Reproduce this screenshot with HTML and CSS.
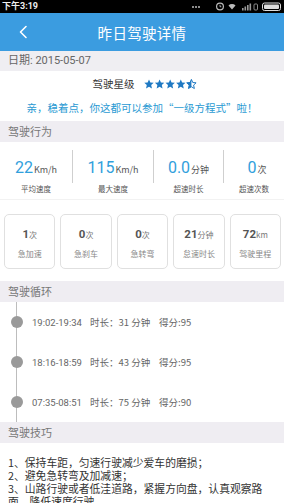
FILE: index.html
```html
<!DOCTYPE html>
<html lang="zh">
<head>
<meta charset="utf-8">
<title>昨日驾驶详情</title>
<link rel="stylesheet" href="styles.css">
</head>
<body>
<div class="page">
  <div class="status">
    <span class="clock">下午3:19</span>
    <span class="sicons">
      <svg width="96" height="13" viewBox="0 0 96 13">
        <g fill="#bbb">
          <circle cx="5" cy="7" r="1"/><circle cx="8" cy="7" r="1"/><circle cx="11" cy="7" r="1"/>
        </g>
        <circle cx="32" cy="6.5" r="3.4" fill="none" stroke="#bbb" stroke-width="1.2"/>
        <path d="M32 4.8v1.9h1.3" fill="none" stroke="#bbb" stroke-width="0.9"/>
        <path d="M44 9.5 L40.5 5.5 A5 5 0 0 1 47.5 5.5 Z" fill="#bbb"/>
        <g fill="#999">
          <rect x="54" y="8" width="1.6" height="2.5"/><rect x="56.5" y="6.5" width="1.6" height="4"/>
          <rect x="59" y="5" width="1.6" height="5.5"/><rect x="61.5" y="3.5" width="1.6" height="7"/>
        </g>
        <rect x="66" y="4" width="3.5" height="6" rx="1" fill="none" stroke="#999" stroke-width="0.9"/>
        <rect x="74.5" y="3" width="18" height="7.5" rx="2" fill="none" stroke="#ddd" stroke-width="1"/>
        <rect x="76" y="4.5" width="15" height="4.5" rx="1" fill="#ddd"/>
      </svg>
    </span>
  </div>

  <header class="appbar">
    <span class="back">
      <svg width="10" height="14" viewBox="0 0 10 14"><path d="M8 1.5 L2.5 7 L8 12.5" fill="none" stroke="#fff" stroke-width="1.6" stroke-linecap="round" stroke-linejoin="round"/></svg>
    </span>
    <h1 class="title">昨日驾驶详情</h1>
    <span></span>
  </header>

  <div class="datebar">日期: 2015-05-07</div>

  <div class="rating">
    <div class="rating-row">
      <span class="rating-label">驾驶星级</span>
      <span class="stars">
        <svg width="54" height="11" viewBox="0 0 54 11">
          <defs>
            <path id="st" d="M5 0.4 L6.35 3.5 L9.7 3.8 L7.2 6.1 L7.95 9.5 L5 7.75 L2.05 9.5 L2.8 6.1 L0.3 3.8 L3.65 3.5 Z"/>
            <clipPath id="half"><rect x="0" y="0" width="5" height="11"/></clipPath>
          </defs>
          <g fill="#1f79c3">
            <use href="#st" x="0"/>
            <use href="#st" x="10.6"/>
            <use href="#st" x="21.2"/>
            <use href="#st" x="31.8"/>
          </g>
          <g transform="translate(42.4 0)">
            <use href="#st" fill="none" stroke="#1f79c3" stroke-width="1"/>
            <use href="#st" fill="#1f79c3" clip-path="url(#half)"/>
          </g>
        </svg>
      </span>
    </div>
    <p class="cheer">亲，稳着点，你这都可以参加“一级方程式”啦！</p>
  </div>

  <div class="section-head">驾驶行为</div>
  <div class="stats">
    <div class="stat s1"><div class="val"><b>22</b><i>Km/h</i></div><div class="lab">平均速度</div></div>
    <div class="stat s2"><div class="val"><b>115</b><i>Km/h</i></div><div class="lab">最大速度</div></div>
    <div class="stat s3"><div class="val"><b>0.0</b><i>分钟</i></div><div class="lab">超速时长</div></div>
    <div class="stat s4"><div class="val"><b>0</b><i>次</i></div><div class="lab">超速次数</div></div>
  </div>

  <div class="cards">
    <div class="card"><div class="cval"><b>1</b><i>次</i></div><div class="clab">急加速</div></div>
    <div class="card"><div class="cval"><b>0</b><i>次</i></div><div class="clab">急刹车</div></div>
    <div class="card"><div class="cval"><b>0</b><i>次</i></div><div class="clab">急转弯</div></div>
    <div class="card"><div class="cval"><b>21</b><i>分钟</i></div><div class="clab">怠速时长</div></div>
    <div class="card"><div class="cval"><b>72</b><i>km</i></div><div class="clab">驾驶里程</div></div>
  </div>

  <div class="section-head">驾驶循环</div>
  <div class="timeline">
    <div class="trip"><span class="dot"></span><span class="ttime">19:02-19:34</span><span class="tdur">时长：31 分钟</span><span class="tscore">得分:95</span></div>
    <div class="trip"><span class="dot"></span><span class="ttime">18:16-18:59</span><span class="tdur">时长：43 分钟</span><span class="tscore">得分:95</span></div>
    <div class="trip"><span class="dot"></span><span class="ttime">07:35-08:51</span><span class="tdur">时长：75 分钟</span><span class="tscore">得分:90</span></div>
  </div>

  <div class="section-head">驾驶技巧</div>
  <div class="tips">
    <p>1、保持车距，匀速行驶减少爱车的磨损；</p>
    <p>2、避免急转弯及加减速；</p>
    <p>3、山路行驶或者低洼道路，紧握方向盘，认真观察路面，降低速度行驶。</p>
  </div>
</div>
</body>
</html>
```

FILE: styles.css
```css
* { box-sizing: border-box; margin: 0; padding: 0; }
html, body { background: #fff; }
body {
  width: 284px;
  height: 503px;
  overflow: hidden;
  font-family: "Noto Sans CJK SC", "Roboto", sans-serif;
  color: #333;
}
.page { width: 284px; }

.status {
  height: 13px;
  background: #000;
  display: flex;
  align-items: center;
  justify-content: space-between;
  padding-left: 2px;
}
.clock { color: #eee; font-size: 9px; font-weight: bold; line-height: 13px; font-family: "Roboto", "Noto Sans CJK SC", sans-serif; }
.sicons { display: flex; height: 13px; }

.appbar {
  height: 38px;
  background: #3b9ce0;
  display: grid;
  grid-template-columns: 1fr auto 1fr;
  align-items: center;
}
.back { padding-left: 18px; display: flex; align-items: center; }
.title { color: #fff; font-size: 14.5px; font-weight: normal; letter-spacing: 0.3px; }

.datebar {
  height: 20px;
  background: #efeef2;
  color: #666;
  font-size: 11px;
  line-height: 20px;
  padding-left: 8px;
  font-family: "Roboto", "Noto Sans CJK SC", sans-serif;
}

.rating { height: 50px; padding-top: 5px; text-align: center; }
.rating-row { display: flex; justify-content: center; align-items: center; height: 16px; gap: 9px; padding-left: 6px; }
.rating-label { font-size: 10.5px; color: #333; line-height: 16px; }
.stars { display: flex; align-items: center; }
.cheer { margin-top: 9px; font-size: 10.5px; line-height: 14px; color: #2a9ad3; }

.section-head {
  height: 21px;
  background: #efedf2;
  color: #777;
  font-size: 11px;
  line-height: 21px;
  padding-left: 8px;
}

.stats {
  height: 58px;
  display: grid;
  grid-template-columns: 72px 81px 70px 1fr;
  padding-top: 8px;
  border-bottom: 1px solid #f2f2f2;
}
.stat { height: 33px; padding-top: 7px; text-align: center; }
.stat + .stat { border-left: 1px solid #cfcfcf; }
.val { line-height: 18px; white-space: nowrap; }
.val b { font-weight: normal; font-size: 16px; color: #31a0dc; font-family: "Roboto", sans-serif; }
.val i { font-style: normal; font-size: 9px; color: #555; margin-left: 1px; }
.s4 .val { padding-left: 6px; }
.lab { margin-top: 4px; font-size: 7.5px; line-height: 12px; color: #555; }

.cards {
  display: flex;
  gap: 5px;
  padding: 14px 3px 12px 4px;
}
.card {
  flex: 1;
  height: 55px;
  border: 1px solid #e0e0e0;
  border-radius: 5px;
  text-align: center;
  padding-top: 9px;
}
.cval { line-height: 14px; color: #555; white-space: nowrap; }
.cval b { font-size: 11.5px; font-weight: bold; font-family: "Roboto", sans-serif; color: #555; }
.cval i { font-style: normal; font-size: 8px; color: #777; }
.clab { margin-top: 6px; font-size: 8px; line-height: 12px; color: #888; }

.timeline { position: relative; height: 120px; }
.timeline::before {
  content: "";
  position: absolute;
  left: 16px;
  top: 0;
  bottom: 0;
  width: 1px;
  background: #bdbdbd;
}
.trip { height: 40px; display: flex; align-items: center; font-size: 9.5px; color: #666; white-space: nowrap; position: relative; }
.dot { width: 12px; height: 12px; border-radius: 50%; background: #9a9a9a; margin-left: 11px; margin-right: 9px; }
.ttime { width: 58px; font-family: "Roboto", sans-serif; }
.tdur { width: 69px; }

.tips { padding: 13px 8px 0 8px; }
.tips p { font-size: 10.8px; line-height: 13px; color: #333; }
```
